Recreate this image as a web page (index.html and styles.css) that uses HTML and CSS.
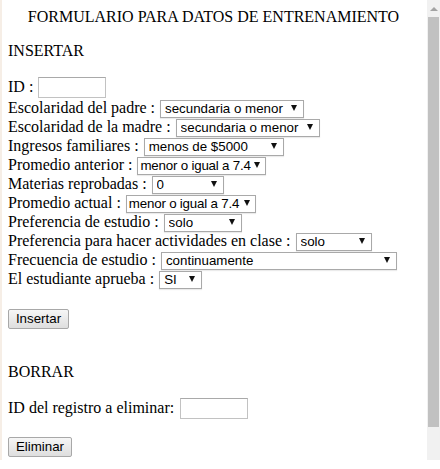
FILE: index.html
```html
<!DOCTYPE html>
<html lang="es">
<head>
<meta charset="utf-8">
<title>Formulario para datos de entrenamiento</title>
<link rel="stylesheet" href="styles.css">
</head>
<body>
<div class="frame">
  <main class="page">
    <p class="title">FORMULARIO PARA DATOS DE ENTRENAMIENTO</p>
    <p class="section">INSERTAR</p>
    <form class="form">
      <div class="row row-id">ID :&nbsp;<input class="text-input" type="text"></div>
      <div class="row">Escolaridad del padre :&nbsp;<span class="sel w-padre"><select><option>secundaria o menor</option><option>preparatoria</option><option>licenciatura</option></select></span></div>
      <div class="row">Escolaridad de la madre :&nbsp;<span class="sel w-madre"><select><option>secundaria o menor</option><option>preparatoria</option><option>licenciatura</option></select></span></div>
      <div class="row">Ingresos familiares :&nbsp;<span class="sel w-ingresos"><select><option>menos de $5000</option><option>más de $5000</option></select></span></div>
      <div class="row">Promedio anterior :&nbsp;<span class="sel tight w-anterior"><select><option>menor o igual a 7.4</option><option>mayor a 7.4</option></select></span></div>
      <div class="row">Materias reprobadas :&nbsp;<span class="sel w-materias"><select><option>0</option><option>1</option><option>2 o más</option></select></span></div>
      <div class="row">Promedio actual :&nbsp;<span class="sel tight w-actual"><select><option>menor o igual a 7.4</option><option>mayor a 7.4</option></select></span></div>
      <div class="row">Preferencia de estudio :&nbsp;<span class="sel w-pref"><select><option>solo</option><option>en grupo</option></select></span></div>
      <div class="row">Preferencia para hacer actividades en clase :&nbsp;<span class="sel w-activ"><select><option>solo</option><option>en grupo</option></select></span></div>
      <div class="row">Frecuencia de estudio :&nbsp;<span class="sel w-frec"><select><option>continuamente</option><option>antes del examen</option></select></span></div>
      <div class="row">El estudiante aprueba :&nbsp;<span class="sel w-aprueba"><select><option>SI</option><option>NO</option></select></span></div>
      <div class="actions"><button class="btn btn-insert" type="button">Insertar</button></div>
    </form>
    <p class="section section-del">BORRAR</p>
    <form class="form">
      <div class="row row-del">ID del registro a eliminar:&nbsp;<input class="text-input" type="text"></div>
      <div class="actions actions-del"><button class="btn btn-delete" type="button">Eliminar</button></div>
    </form>
  </main>
  <div class="scrollbar" aria-hidden="true">
    <div class="sb-up"><span class="sb-arrow"></span></div>
    <div class="sb-thumb"></div>
    <div class="sb-track"></div>
  </div>
</div>
</body>
</html>
```
FILE: styles.css
```css
html, body {
  margin: 0;
  padding: 0;
  background: #ffffff;
}

body {
  font-family: "Liberation Serif", "Times New Roman", serif;
  font-size: 16px;
  color: #000;
}

.frame {
  display: flex;
  height: 460px;
  border-left: 2px solid #f6eee6;
  box-sizing: border-box;
}

.page {
  flex: 1;
  padding: 8px 8px 0 6px;
  overflow: hidden;
}

.title {
  margin: 0 0 16px;
  line-height: 18px;
  text-align: center;
}

.section {
  margin: 0 0 16px;
  line-height: 18px;
}

.section-del {
  margin-top: 34px;
  margin-bottom: 17px;
}

.form {
  margin: 0;
}

.row {
  display: flex;
  align-items: center;
  height: 19.1px;
  white-space: nowrap;
  line-height: 18px;
}

.row-id {
  height: 22px;
}

.row-del {
  height: 21px;
}

.text-input {
  width: 68px;
  height: 21px;
  box-sizing: border-box;
  border: 1px solid #c2c2c2;
  border-top-color: #a9a9a9;
  padding: 0 2px;
  margin: 0 0 0 1px;
  font-family: "Liberation Sans", Arial, sans-serif;
  font-size: 13.33px;
  background: #fff;
}

.row-del .text-input {
  margin-left: 2px;
}

.sel {
  position: relative;
  display: inline-block;
  height: 18px;
  margin-left: 1px;
}

.sel select {
  -webkit-appearance: none;
  appearance: none;
  width: 100%;
  height: 18px;
  box-sizing: border-box;
  margin: 0;
  padding: 0 0 0 4px;
  border: 1px solid #a9a9a9;
  border-radius: 0;
  background: #fff;
  color: #000;
  font-family: "Liberation Sans", Arial, sans-serif;
  font-size: 13.33px;
  line-height: 16px;
  box-shadow: 0 1px 1px rgba(0, 0, 0, 0.08);
}

.sel.tight select {
  padding-left: 2px;
  letter-spacing: -0.2px;
}

.sel::after {
  content: "";
  position: absolute;
  right: 7px;
  top: 6px;
  border-left: 3.5px solid transparent;
  border-right: 3.5px solid transparent;
  border-top: 6px solid #111;
  pointer-events: none;
}

.sel.tight::after {
  right: 6px;
}

.w-padre { width: 144px; }
.w-madre { width: 144px; }
.w-ingresos { width: 140px; }
.w-anterior { width: 129px; }
.w-materias { width: 72px; }
.w-actual { width: 130px; }
.w-pref { width: 78px; }
.w-activ { width: 76px; }
.w-frec { width: 236px; }
.w-aprueba { width: 43px; }

.actions {
  margin-top: 20px;
}

.actions-del {
  margin-top: 18px;
}

.btn {
  height: 20px;
  box-sizing: border-box;
  margin: 0;
  padding: 0 6px;
  border: 1px solid #a8a8a8;
  border-radius: 2px;
  background: linear-gradient(#f6f6f6, #dedede);
  font-family: "Liberation Sans", Arial, sans-serif;
  font-size: 13.33px;
  color: #000;
  line-height: 18px;
}

.btn-insert { width: 61px; }
.btn-delete { width: 64px; }

.scrollbar {
  width: 13px;
  display: flex;
  flex-direction: column;
  background: #f1f1f1;
}

.sb-up {
  height: 17px;
  display: flex;
  align-items: center;
  justify-content: center;
}

.sb-arrow {
  width: 0;
  height: 0;
  border-left: 4px solid transparent;
  border-right: 4px solid transparent;
  border-bottom: 4px solid #a3a3a3;
}

.sb-thumb {
  height: 410px;
  margin: 0 1px;
  background: #c1c1c1;
}

.sb-track {
  flex: 1;
}
```
